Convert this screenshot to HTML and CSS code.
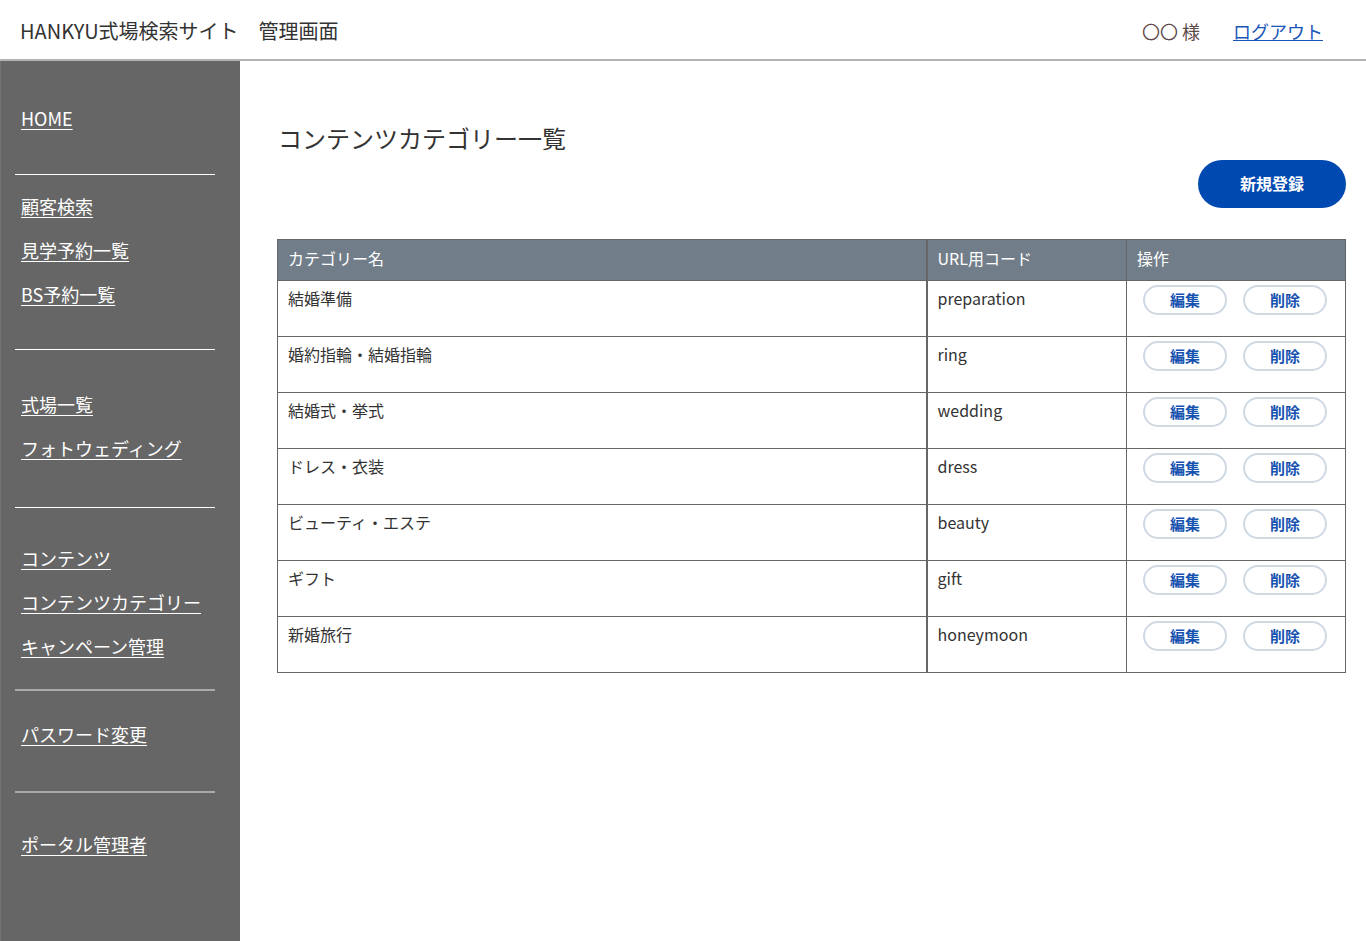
FILE: index.html
```html
<!DOCTYPE html>
<html lang="ja">
<head>
    <meta charset="UTF-8">
    <title>コンテンツカテゴリー一覧</title>
    <link rel="stylesheet" href="styles.css">
</head>
<body>
<div class="header">
    <div class="site_title">HANKYU式場検索サイト　管理画面</div>
    <div class="header_user">
        <span class="user_name">〇〇 様</span>
        <a href="#" class="logout">ログアウト</a>
    </div>
</div>
<div class="wrap">
    <div class="side_menu">
        <ul class="menu_group group1">
            <li><a href="#">HOME</a></li>
        </ul>
        <ul class="menu_group group2">
            <li><a href="#">顧客検索</a></li>
            <li><a href="#">見学予約一覧</a></li>
            <li><a href="#">BS予約一覧</a></li>
        </ul>
        <ul class="menu_group group3">
            <li><a href="#">式場一覧</a></li>
            <li><a href="#">フォトウェディング</a></li>
        </ul>
        <ul class="menu_group group4">
            <li><a href="#">コンテンツ</a></li>
            <li><a href="#">コンテンツカテゴリー</a></li>
            <li><a href="#">キャンペーン管理</a></li>
        </ul>
        <ul class="menu_group group5">
            <li><a href="#">パスワード変更</a></li>
        </ul>
        <ul class="menu_group group6">
            <li><a href="#">ポータル管理者</a></li>
        </ul>
    </div>
    <div class="contents">
        <h1 class="page_title">コンテンツカテゴリー一覧</h1>
        <div class="btn_area">
            <a href="#" class="btn_new">新規登録</a>
        </div>
        <table class="category_table">
            <thead>
            <tr>
                <th class="col_name">カテゴリー名</th>
                <th class="col_code">URL用コード</th>
                <th class="col_ope">操作</th>
            </tr>
            </thead>
            <tbody>
            <tr>
                <td>結婚準備</td>
                <td class="col_code">preparation</td>
                <td class="col_ope"><a href="#" class="btn_small">編集</a><a href="#" class="btn_small">削除</a></td>
            </tr>
            <tr>
                <td>婚約指輪・結婚指輪</td>
                <td class="col_code">ring</td>
                <td class="col_ope"><a href="#" class="btn_small">編集</a><a href="#" class="btn_small">削除</a></td>
            </tr>
            <tr>
                <td>結婚式・挙式</td>
                <td class="col_code">wedding</td>
                <td class="col_ope"><a href="#" class="btn_small">編集</a><a href="#" class="btn_small">削除</a></td>
            </tr>
            <tr>
                <td>ドレス・衣装</td>
                <td class="col_code">dress</td>
                <td class="col_ope"><a href="#" class="btn_small">編集</a><a href="#" class="btn_small">削除</a></td>
            </tr>
            <tr>
                <td>ビューティ・エステ</td>
                <td class="col_code">beauty</td>
                <td class="col_ope"><a href="#" class="btn_small">編集</a><a href="#" class="btn_small">削除</a></td>
            </tr>
            <tr>
                <td>ギフト</td>
                <td class="col_code">gift</td>
                <td class="col_ope"><a href="#" class="btn_small">編集</a><a href="#" class="btn_small">削除</a></td>
            </tr>
            <tr>
                <td>新婚旅行</td>
                <td class="col_code">honeymoon</td>
                <td class="col_ope"><a href="#" class="btn_small">編集</a><a href="#" class="btn_small">削除</a></td>
            </tr>
            </tbody>
        </table>
    </div>
</div>
</body>
</html>
```

FILE: styles.css
```css
html, body{
    margin: 0;
    padding: 0;
}
body{
    font-family: "Noto Sans CJK JP", "Noto Sans", sans-serif;
    color: #333;
    background-color: white;
}
.header{
    box-sizing: border-box;
    height: 61px;
    display: flex;
    align-items: center;
    justify-content: space-between;
    padding: 0 43px 0 20px;
    border-bottom: 2px solid #b3b3b3;
}
.header>.site_title{
    font-size: 20px;
    color: #333;
    padding-top: 2px;
}
.header>.header_user{
    display: flex;
    align-items: center;
    font-size: 18px;
    padding-top: 3px;
}
.header_user>.user_name{
    color: #5e4a4a;
    margin-right: 33px;
}
.header_user>.logout{
    color: #1a56b8;
    text-decoration: underline;
}
.wrap{
    display: flex;
    min-height: 880px;
}
.side_menu{
    box-sizing: border-box;
    width: 240px;
    flex-shrink: 0;
    background-color: #666;
    border-left: 1px solid #737373;
    padding: 0 25px 0 14px;
}
.side_menu>.menu_group{
    list-style: none;
    margin: 0;
    padding: 0 0 0 6px;
}
.menu_group>li{
    line-height: 42px;
    height: 44px;
    font-size: 18px;
}
.menu_group>li>a{
    color: white;
    text-decoration: underline;
    text-underline-offset: 3px;
}
.group1{ padding-top: 36px !important; padding-bottom: 33px !important; border-bottom: 1px solid white; }
.group2{ padding-top: 10px !important; padding-bottom: 32px !important; border-bottom: 1px solid white; }
.group3{ padding-top: 33px !important; padding-bottom: 36px !important; border-bottom: 1px solid white; }
.group4{ padding-top: 29px !important; padding-bottom: 20px !important; border-bottom: 2px solid #aaa; }
.group5{ padding-top: 22px !important; padding-bottom: 34px !important; border-bottom: 2px solid #aaa; }
.group6{ padding-top: 30px !important; }

.contents{
    flex: 1;
    box-sizing: border-box;
    padding: 59px 20px 40px 37px;
}
.contents>.page_title{
    margin: 0;
    font-size: 24px;
    font-weight: normal;
    line-height: 36px;
    color: #333;
    padding-left: 1px;
}
.contents>.btn_area{
    display: flex;
    justify-content: flex-end;
    margin-top: 4px;
}
.btn_area>.btn_new{
    display: block;
    width: 148px;
    height: 48px;
    line-height: 47px;
    border-radius: 24px;
    background-color: #0049b0;
    color: white;
    font-size: 16px;
    font-weight: bold;
    text-align: center;
    text-decoration: none;
}
.category_table{
    width: 100%;
    margin-top: 31px;
    border-collapse: collapse;
    border: 1px solid #666;
    font-size: 16px;
}
.category_table th{
    box-sizing: border-box;
    height: 41px;
    background-color: #717e89;
    color: white;
    font-weight: normal;
    text-align: left;
    vertical-align: top;
    padding: 6px 10px 0;
    line-height: 24px;
    border: 1px solid #666;
}
.category_table td{
    box-sizing: border-box;
    height: 56px;
    vertical-align: top;
    padding: 5px 10px;
    line-height: 24px;
    color: #333;
    border: 1px solid #666;
}
.category_table .col_code{
    width: 200px;
    border-left: 2px solid #666;
}
.category_table .col_ope{
    width: 219px;
}
.category_table td.col_ope{
    padding: 4px 0 0 16px;
}
.col_ope>.btn_small{
    display: inline-block;
    box-sizing: border-box;
    width: 84px;
    height: 30px;
    line-height: 26px;
    margin-right: 16px;
    border: 2px solid #cfd9e3;
    border-radius: 15px;
    color: #1652b0;
    font-size: 15px;
    font-weight: bold;
    text-align: center;
    text-decoration: none;
}
```
